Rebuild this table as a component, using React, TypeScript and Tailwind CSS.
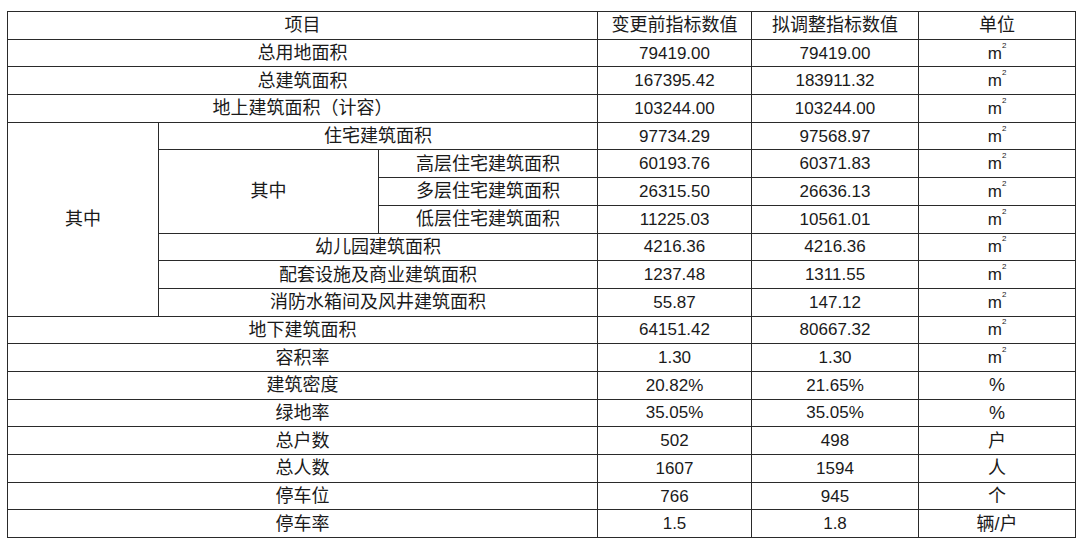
import React from 'react';

type Row = {
  label?: string;
  before: string;
  after: string;
  unit: string;
};

const SQM = '㎡';

const Unit: React.FC<{ u: string }> = ({ u }) => {
  if (u === SQM) {
    return (
      <span className="inline-flex items-start leading-none" aria-label="㎡">
        <span className="text-[17px] leading-none">m</span>
        <span className="text-[8px] leading-none -mt-[3px]">2</span>
      </span>
    );
  }
  return <span className="text-[18px]">{u}</span>;
};

const td = 'border-[1.5px] border-[#2a2a2a] text-center align-middle p-0 leading-none';
const labelCls = `${td} text-[18px]`;
const numCls = `${td} text-[17px]`;

const Values: React.FC<{ r: Row }> = ({ r }) => (
  <>
    <td className={numCls}>{r.before}</td>
    <td className={numCls}>{r.after}</td>
    <td className={td}>
      <Unit u={r.unit} />
    </td>
  </>
);

const topRows: Row[] = [
  { label: '总用地面积', before: '79419.00', after: '79419.00', unit: SQM },
  { label: '总建筑面积', before: '167395.42', after: '183911.32', unit: SQM },
  { label: '地上建筑面积（计容）', before: '103244.00', after: '103244.00', unit: SQM },
];

const subRows: Row[] = [
  { label: '高层住宅建筑面积', before: '60193.76', after: '60371.83', unit: SQM },
  { label: '多层住宅建筑面积', before: '26315.50', after: '26636.13', unit: SQM },
  { label: '低层住宅建筑面积', before: '11225.03', after: '10561.01', unit: SQM },
];

const midRows: Row[] = [
  { label: '幼儿园建筑面积', before: '4216.36', after: '4216.36', unit: SQM },
  { label: '配套设施及商业建筑面积', before: '1237.48', after: '1311.55', unit: SQM },
  { label: '消防水箱间及风井建筑面积', before: '55.87', after: '147.12', unit: SQM },
];

const bottomRows: Row[] = [
  { label: '地下建筑面积', before: '64151.42', after: '80667.32', unit: SQM },
  { label: '容积率', before: '1.30', after: '1.30', unit: SQM },
  { label: '建筑密度', before: '20.82%', after: '21.65%', unit: '%' },
  { label: '绿地率', before: '35.05%', after: '35.05%', unit: '%' },
  { label: '总户数', before: '502', after: '498', unit: '户' },
  { label: '总人数', before: '1607', after: '1594', unit: '人' },
  { label: '停车位', before: '766', after: '945', unit: '个' },
  { label: '停车率', before: '1.5', after: '1.8', unit: '辆/户' },
];

const rowH = 'h-[27.7px]';

export default function App() {
  return (
    <div
      className="w-[1080px] h-[543px] bg-white pl-[7px] pt-[11px] text-[#1a1a1a]"
      style={{ fontFamily: '"Liberation Sans", "Noto Sans CJK SC", sans-serif' }}
    >
      <table className="border-collapse table-fixed w-[1068px]">
        <colgroup>
          <col className="w-[151px]" />
          <col className="w-[220px]" />
          <col className="w-[219px]" />
          <col className="w-[154px]" />
          <col className="w-[167px]" />
          <col className="w-[157px]" />
        </colgroup>
        <tbody>
          <tr className={rowH}>
            <td colSpan={3} className={labelCls}>项目</td>
            <td className={labelCls}>变更前指标数值</td>
            <td className={labelCls}>拟调整指标数值</td>
            <td className={labelCls}>单位</td>
          </tr>

          {topRows.map((r) => (
            <tr key={r.label} className={rowH}>
              <td colSpan={3} className={labelCls}>{r.label}</td>
              <Values r={r} />
            </tr>
          ))}

          <tr className={rowH}>
            <td rowSpan={7} className={labelCls}>其中</td>
            <td colSpan={2} className={labelCls}>住宅建筑面积</td>
            <Values r={{ before: '97734.29', after: '97568.97', unit: SQM }} />
          </tr>

          {subRows.map((r, i) => (
            <tr key={r.label} className={rowH}>
              {i === 0 && (
                <td rowSpan={3} className={labelCls}>其中</td>
              )}
              <td className={labelCls}>{r.label}</td>
              <Values r={r} />
            </tr>
          ))}

          {midRows.map((r) => (
            <tr key={r.label} className={rowH}>
              <td colSpan={2} className={labelCls}>{r.label}</td>
              <Values r={r} />
            </tr>
          ))}

          {bottomRows.map((r) => (
            <tr key={r.label} className={rowH}>
              <td colSpan={3} className={labelCls}>{r.label}</td>
              <Values r={r} />
            </tr>
          ))}
        </tbody>
      </table>
    </div>
  );
}
